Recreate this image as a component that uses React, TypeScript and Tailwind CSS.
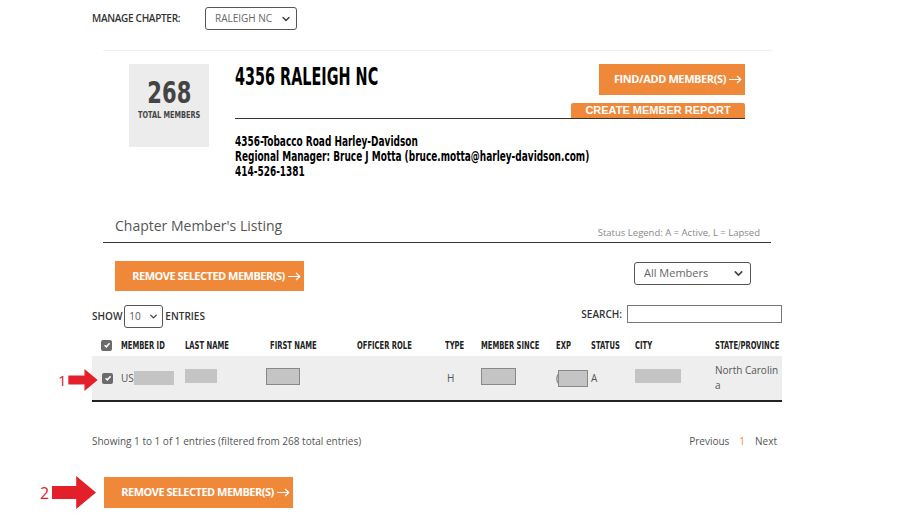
import { ChevronDown } from "lucide-react";
import type { ReactNode } from "react";

const cond = "font-['DejaVu_Sans',sans-serif] font-bold";
const open = "font-['Open_Sans',sans-serif]";
const orange = "bg-[#f0883a]";

// the chapter font in the screenshot is a narrow display face; squeeze DejaVu Bold to its width
function Narrow({ children, className }: { children: ReactNode; className: string }) {
  return <span className={`inline-block whitespace-nowrap ${cond} ${className}`}>{children}</span>;
}

function Arrow({ w, h }: { w: number; h: number }) {
  return (
    <svg width={w} height={h} viewBox="0 0 40 30">
      <polygon points="0,9 22,9 22,0 40,15 22,30 22,21 0,21" fill="#e3202a" />
    </svg>
  );
}

function Thin() {
  return (
    <svg width="13" height="9" viewBox="0 0 13 9" className="ml-[3px] inline-block">
      <path d="M0 4.5 H11.5 M8 1 L11.8 4.5 L8 8" stroke="white" strokeWidth="1.2" fill="none" />
    </svg>
  );
}

function Check() {
  return (
    <span className="flex h-[11px] w-[11px] items-center justify-center rounded-[2px] bg-[#6b6b6b]">
      <svg width="8" height="8" viewBox="0 0 10 10">
        <path d="M2 5.2 L4.2 7.3 L8.2 2.8" stroke="white" strokeWidth="1.8" fill="none" />
      </svg>
    </span>
  );
}

function Redact({ w, border }: { w: number; border?: boolean }) {
  return (
    <span
      className={`inline-block h-[14px] bg-[#c4c4c4] ${border ? "h-[17px] border border-[#888]" : ""}`}
      style={{ width: w }}
    />
  );
}

const headers: [string, string][] = [
  ["MEMBER ID", "w-[64px]"],
  ["LAST NAME", "w-[85px]"],
  ["FIRST NAME", "w-[87px]"],
  ["OFFICER ROLE", "w-[88px]"],
  ["TYPE", "w-[36px]"],
  ["MEMBER SINCE", "w-[75px]"],
  ["EXP", "w-[35px]"],
  ["STATUS", "w-[44px]"],
  ["CITY", "w-[80px]"],
  ["STATE/PROVINCE", "w-[67px]"],
];

export default function App() {
  return (
    <div className={`relative h-[522px] w-[900px] overflow-hidden bg-white text-[#333] ${open}`}>
      <div className="ml-[92px] w-[690px]">
        {/* manage chapter */}
        <div className="flex items-center pt-[7px]">
          <span className="w-[113px] text-[10px] font-semibold tracking-[-0.3px] text-[#333]">MANAGE CHAPTER:</span>
          <div className="flex h-[23px] w-[92px] items-center justify-between rounded-[3px] border border-[#555] pl-[9px] pr-[4px] text-[10px] text-[#666]">
            RALEIGH NC
            <ChevronDown size={12} strokeWidth={3} className="text-[#444]" />
          </div>
        </div>
        <div className="ml-[11px] mt-[20px] h-px w-[669px] bg-[#f0f0f0]" />

        {/* chapter header */}
        <div className="mt-[13px] flex">
          <div className="ml-[37px] flex h-[83px] w-[80px] flex-col items-center bg-[#ececec] pt-[11px] text-[#444]">
            <Narrow className="origin-center scale-x-[0.68] text-[31px] leading-[34px]">268</Narrow>
            <Narrow className="origin-center scale-x-[0.69] text-[9.5px] leading-[11px]">TOTAL MEMBERS</Narrow>
          </div>
          <div className="ml-[26px] w-[510px]">
            <div className="flex items-start justify-between">
              <Narrow className="origin-left scale-x-[0.6] pt-[1px] text-[24px] leading-[24px] text-black">
                4356 RALEIGH NC
              </Narrow>
              <div className="flex flex-col items-end">
                <button className={`${orange} flex h-[31px] w-[146px] items-center justify-center pl-[12px] text-[11px] font-bold tracking-[-0.4px] text-white`}>
                  FIND/ADD MEMBER(S)
                  <Thin />
                </button>
                <button className={`${orange} mt-[8px] h-[15px] w-[174px] rounded-t-[2px] font-['Liberation_Sans',sans-serif] text-[11px] font-bold leading-[15px] text-white`}>
                  CREATE MEMBER REPORT
                </button>
              </div>
            </div>
            <div className="h-px bg-[#333]" />
            <div className="mt-[15px] flex flex-col text-black">
              <Narrow className="origin-left scale-x-[0.64] text-[14px] leading-[15px]">4356-Tobacco Road Harley-Davidson</Narrow>
              <Narrow className="origin-left scale-x-[0.64] text-[14px] leading-[15px]">
                Regional Manager: Bruce J Motta (bruce.motta@harley-davidson.com)
              </Narrow>
              <Narrow className="origin-left scale-x-[0.64] text-[14px] leading-[15px]">414-526-1381</Narrow>
            </div>
          </div>
        </div>

        {/* listing header */}
        <div className="ml-[11px] mt-[36px] w-[668px]">
          <div className="flex items-end justify-between">
            <span className="pb-[6px] pl-[12px] text-[14px] text-[#555]">Chapter Member's Listing</span>
            <span className="pb-[2px] pr-[11px] text-[9.5px] text-[#888]">Status Legend: A = Active, L = Lapsed</span>
          </div>
          <div className="h-px bg-[#333]" />
          <div className="mt-[18px] flex items-start justify-between">
            <button className={`${orange} ml-[12px] flex h-[30px] w-[189px] items-center justify-center pl-[14px] text-[11px] font-bold tracking-[-0.5px] text-white`}>
              REMOVE SELECTED MEMBER(S)
              <Thin />
            </button>
            <div className="mr-[20px] mt-[1px] flex h-[23px] w-[117px] items-center justify-between rounded-[3px] border border-[#555] pl-[9px] pr-[5px] text-[11px] text-[#666]">
              All Members
              <ChevronDown size={13} strokeWidth={3} className="text-[#444]" />
            </div>
          </div>
        </div>

        {/* show / search */}
        <div className="mt-[14px] flex items-start justify-between">
          <div className="flex items-center text-[10px] font-semibold text-[#333]">
            SHOW
            <div className="mx-[2px] flex h-[23px] w-[39px] items-center justify-between rounded-[3px] border border-[#555] pl-[4px] pr-[3px] text-[10px] font-normal text-[#555]">
              10
              <ChevronDown size={11} strokeWidth={3} className="text-[#444]" />
            </div>
            ENTRIES
          </div>
          <div className="flex items-center text-[10px] font-semibold text-[#333]">
            SEARCH:
            <div className="ml-[5px] h-[18px] w-[155px] border border-[#777]" />
          </div>
        </div>

        {/* table */}
        <div className="mt-[5px]">
          <div className="flex h-[22px] items-center text-[#222]">
            <span className="flex w-[29px] justify-center pt-[2px]">
              <Check />
            </span>
            {headers.map(([h, w]) => (
              <span key={h} className={`${w} leading-[12px]`}>
                <Narrow className="origin-left scale-x-[0.68] text-[10px] leading-[12px]">{h}</Narrow>
              </span>
            ))}
          </div>
          <div className="mt-px flex h-[46px] items-center border-b-2 border-[#222] bg-[#eeeeee] text-[10px] text-[#555]">
            <span className="flex w-[29px] justify-center pl-[2px]">
              <Check />
            </span>
            <span className="flex w-[64px] items-center">
              US
              <Redact w={40} />
            </span>
            <span className="w-[85px]">
              <Redact w={32} />
            </span>
            <span className="w-[87px]">
              <span className="-ml-[4px] inline-block">
                <Redact w={34} border />
              </span>
            </span>
            <span className="w-[88px]" />
            <span className="w-[36px] pl-[2px]">H</span>
            <span className="w-[75px]">
              <Redact w={35} border />
            </span>
            <span className="flex w-[35px] items-center">
              <span className="-mr-[1px]">(</span>
              <Redact w={30} border />
            </span>
            <span className="w-[44px]">A</span>
            <span className="w-[80px]">
              <Redact w={46} />
            </span>
            <span className="w-[67px] leading-[15px]">
              North Carolin
              <br />a
            </span>
          </div>
        </div>

        {/* footer */}
        <div className="mt-[32px] flex items-center justify-between text-[10px] text-[#555]">
          <span>Showing 1 to 1 of 1 entries (filtered from 268 total entries)</span>
          <div className="mr-[5px] flex gap-[10px]">
            <span>Previous</span>
            <span className="text-[#f0883a]">1</span>
            <span>Next</span>
          </div>
        </div>

        <div className="mt-[27px] flex items-center">
          <div className="-ml-[52px] flex items-center">
            <span className="w-[12px] text-[16px] leading-none text-[#e3202a]">2</span>
            <Arrow w={44} h={33} />
          </div>
          <button className={`${orange} ml-[8px] flex h-[31px] w-[189px] items-center justify-center pl-[14px] text-[11px] font-bold tracking-[-0.5px] text-white`}>
            REMOVE SELECTED MEMBER(S)
            <Thin />
          </button>
        </div>
      </div>

      {/* annotation arrow 1 */}
      <div className="absolute left-[58px] top-[369px] flex items-center">
        <span className="w-[10px] text-[15px] leading-none text-[#e3202a]">1</span>
        <Arrow w={30} h={22} />
      </div>
    </div>
  );
}
